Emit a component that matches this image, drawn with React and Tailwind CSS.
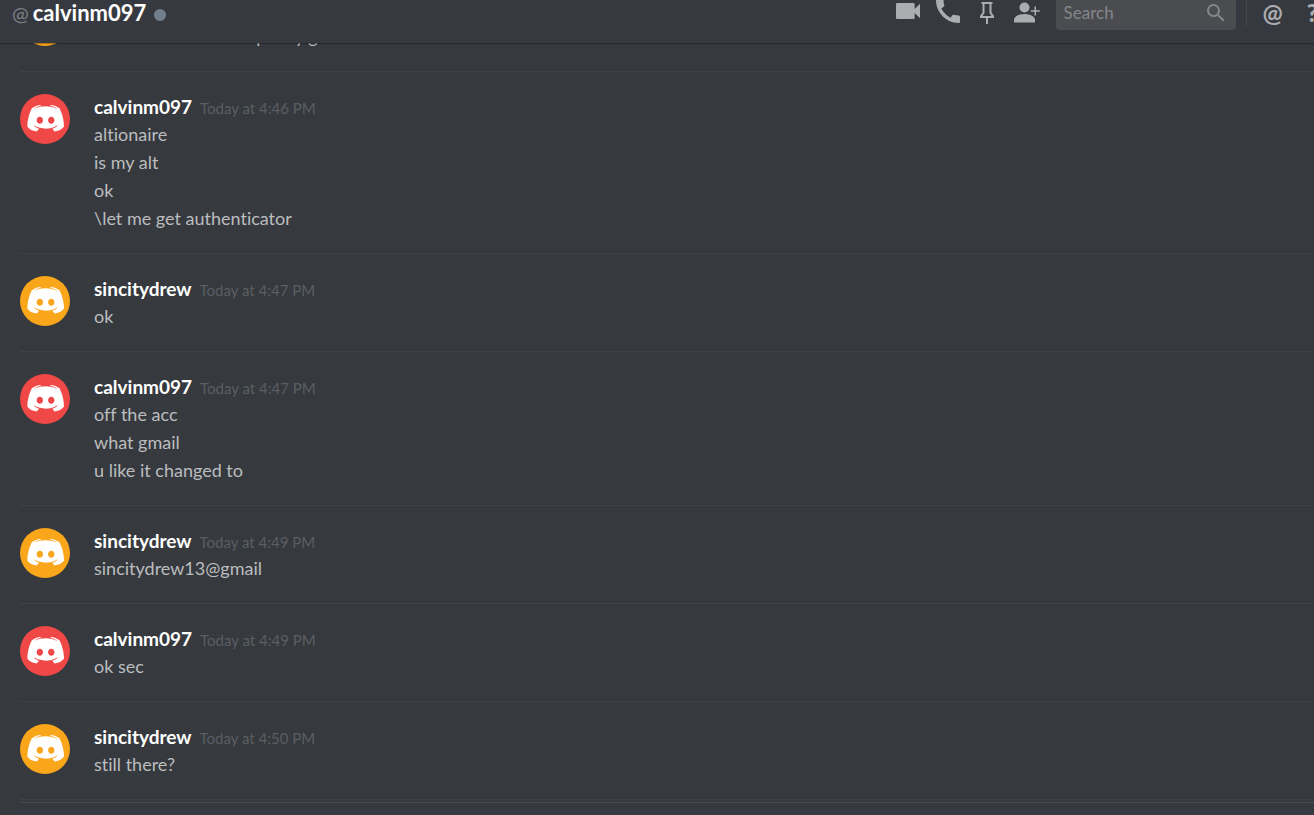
import { MdVideocam, MdCall, MdSearch } from "react-icons/md";

const previous = { id: 0, author: "sincitydrew", time: "Today at 4:45 PM", color: "orange", lines: ["the account one is a pretty good account"] };

const groups = [
  { id: 1, author: "calvinm097", time: "Today at 4:46 PM", color: "red", lines: ["altionaire", "is my alt", "ok", "\\let me get authenticator"] },
  { id: 2, author: "sincitydrew", time: "Today at 4:47 PM", color: "orange", lines: ["ok"] },
  { id: 3, author: "calvinm097", time: "Today at 4:47 PM", color: "red", lines: ["off the acc", "what gmail", "u like it changed to"] },
  { id: 4, author: "sincitydrew", time: "Today at 4:49 PM", color: "orange", lines: ["sincitydrew13@gmail"] },
  { id: 5, author: "calvinm097", time: "Today at 4:49 PM", color: "red", lines: ["ok sec"] },
  { id: 6, author: "sincitydrew", time: "Today at 4:50 PM", color: "orange", lines: ["still there?"] },
];

export default function App() {
  return (
    <div className="h-screen flex flex-col overflow-hidden bg-[#36393e] font-['Lato','Open_Sans',sans-serif] [font-variant-ligatures:none]">
      <Header />
      <main className="flex flex-1 flex-col overflow-hidden pl-5">
        {/* Tail of the message that is scrolled under the header */}
        <div className="flex h-7 shrink-0 flex-col justify-end overflow-hidden">
          <MessageGroup group={previous} />
        </div>
        {groups.map((group) => (
          <MessageGroup key={group.id} group={group} />
        ))}
        <div className="h-[3px] shrink-0 border-t border-[#3f4247]" />
        <div className="flex-1 border-t border-[#484b51] bg-[#36393f]" />
      </main>
    </div>
  );
}

function Header() {
  return (
    <header className="relative z-10 flex h-[43px] shrink-0 items-center overflow-hidden bg-[#36393f] pb-[18px] pl-3 shadow-[0_1px_1px_rgba(0,0,0,0.3)]">
      <span className="text-xl leading-6 text-[#7d8086]">@</span>
      <h1 className="ml-1 text-[22px] font-bold leading-6 text-white">calvinm097</h1>
      <span className="ml-2 mt-1 h-3 w-3 rounded-full bg-[#747f8d]" />
      <div className="-mr-1 ml-auto flex shrink-0 items-center text-[#abadb1]">
        <button aria-label="Start video call" className="pb-1">
          <MdVideocam className="h-8 w-8" />
        </button>
        <button aria-label="Start call" className="ml-2 pb-1">
          <MdCall className="h-8 w-8" />
        </button>
        <button aria-label="Pinned messages" className="ml-4">
          <PinIcon />
        </button>
        <button aria-label="Add friends" className="ml-5">
          <PersonAddIcon />
        </button>
        <label className="ml-4 flex h-[35px] w-[180px] items-center rounded bg-[#4b4c50] px-2">
          <input
            aria-label="Search"
            placeholder="Search"
            className="min-w-0 flex-1 bg-transparent text-[17px] outline-none placeholder:text-[#85868a]"
          />
          <MdSearch className="h-6 w-6 text-[#85868a]" />
        </label>
        <span className="ml-[10px] h-[26px] w-px bg-[#44474c]" />
        <button aria-label="Mentions" className="ml-4 text-2xl font-bold leading-6">@</button>
        <button aria-label="Help" className="ml-6 text-2xl font-black leading-6">?</button>
      </div>
    </header>
  );
}

function MessageGroup({ group }) {
  return (
    <article className="flex shrink-0 gap-6 border-t border-[#3f4247] pb-[21px] pt-[22px]">
      <Avatar color={group.color} />
      <div className="min-w-0">
        <div className="flex h-[26px] items-baseline gap-2">
          <h2 className="text-[19px] font-bold leading-[25px] text-white">{group.author}</h2>
          <time className="text-[15px] leading-[25px] text-[#5b5e63]">{group.time}</time>
        </div>
        {group.lines.map((line) => (
          <p key={line} className="text-lg leading-7 text-[#bbbdbf]">{line}</p>
        ))}
      </div>
    </article>
  );
}

function Avatar({ color }) {
  return (
    <div className={`flex h-[50px] w-[50px] shrink-0 items-center justify-center rounded-full ${color === "red" ? "bg-[#f04747]" : "bg-[#faa61a]"}`}>
      <svg viewBox="73 119 302 232" className="w-[37px] text-white" fill="currentColor" fillRule="evenodd">
        <path d="M375.04 295.424c0-82.432-36.864-149.248-36.864-149.248-36.864-27.648-71.936-26.88-71.936-26.88l-3.584 4.096c43.52 13.312 63.744 32.512 63.744 32.512-60.811-33.329-132.244-33.335-191.232-7.424-9.472 4.352-15.104 7.424-15.104 7.424s21.248-20.224 67.328-33.536l-2.56-3.072s-35.072-.768-71.936 26.88c0 0-36.864 66.816-36.864 149.248 0 0 21.504 37.12 78.08 38.912 0 0 9.472-11.52 17.152-21.248-32.512-9.728-44.8-30.208-44.8-30.208 3.766 2.636 9.976 6.053 10.496 6.4 43.21 24.198 104.588 32.126 159.744 8.96 8.96-3.328 18.944-8.192 29.44-15.104 0 0-12.8 20.992-46.336 30.464 7.68 9.728 16.896 20.736 16.896 20.736 56.576-1.792 78.336-38.912 78.336-38.912zM297.216 243.2c0 15.616-11.52 28.416-26.112 28.416-14.336 0-26.112-12.8-26.112-28.416s11.52-28.416 26.112-28.416c14.592 0 26.112 12.8 26.112 28.416zm-119.552-28.416c-14.592 0-26.112 12.8-26.112 28.416s11.776 28.416 26.112 28.416c14.592 0 26.112-12.8 26.112-28.416.256-15.616-11.52-28.416-26.112-28.416z" />
      </svg>
    </div>
  );
}

function PinIcon() {
  return (
    <svg viewBox="0 0 14 22" className="h-[22px] w-[14px]" fill="currentColor" fillRule="evenodd">
      <path d="M1.500 0h11v2h-1v8.500l2.500 3.500v2H8v6H6v-6H0v-2l2.500-3.500V2h-1zM4.500 2v9l-2 3h9l-2-3V2z" />
    </svg>
  );
}

function PersonAddIcon() {
  return (
    <svg viewBox="0 0 26 21" className="h-[21px] w-[26px]" fill="currentColor">
      <circle cx="10.500" cy="5.500" r="5" />
      <path d="M0 20.500v-2.500c0-4 6-6 10.500-6s10.500 2 10.500 6v2.500z" />
      <path d="M20.500 4.500h1.500v3.700h3.700v1.500H22v3.700h-1.500V9.700h-3.700V8.200h3.700z" />
    </svg>
  );
}
